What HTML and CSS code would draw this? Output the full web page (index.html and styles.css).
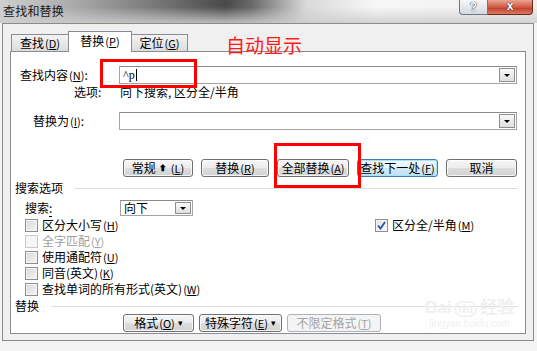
FILE: index.html
```html
<!DOCTYPE html>
<html lang="zh-CN">
<head>
    <meta charset="UTF-8">
    <title>查找和替换</title>
    <link rel="stylesheet" href="styles.css">
</head>
<body>
    <div class="titlebar">
        <span class="title">查找和替换</span>
        <div class="winbtns">
            <span class="help">?</span>
            <span class="close">x</span>
        </div>
    </div>

    <div class="window">
        <div class="tabs">
            <div class="tab t1">查找<span class="k">(<u>D</u>)</span></div>
            <div class="tab t2 on">替换<span class="k">(<u>P</u>)</span></div>
            <div class="tab t3">定位<span class="k">(<u>G</u>)</span></div>
        </div>

        <div class="panel">
            <!-- 查找内容 -->
            <div class="row">
                <label class="lbl">查找内容<span class="k">(<u>N</u>)</span>:</label>
                <div class="combo">
                    <span class="val">^p<i class="caret"></i></span>
                    <span class="drop"><i></i></span>
                </div>
            </div>
            <div class="opts">
                <span class="olbl">选项:</span>
                <span>向下搜索, 区分全/半角</span>
            </div>

            <!-- 替换为 -->
            <div class="row rep">
                <label class="lbl">替换为<span class="k">(<u>I</u>)</span>:</label>
                <div class="combo">
                    <span class="val"></span>
                    <span class="drop"><i></i></span>
                </div>
            </div>

            <div class="btns">
                <button class="btn w70">常规 <span class="up">&#x2b06;</span> <span class="k">(<u>L</u>)</span></button>
                <button class="btn w68">替换<span class="k">(<u>R</u>)</span></button>
                <button class="btn w72">全部替换<span class="k">(<u>A</u>)</span></button>
                <button class="btn w81 focus">查找下一处<span class="k">(<u>F</u>)</span></button>
                <button class="btn w71">取消</button>
            </div>

            <!-- 搜索选项 -->
            <div class="sect">搜索选项</div>
            <div class="srch">
                <span class="slbl">搜索<u>:</u></span>
                <div class="select">
                    <span class="val">向下</span>
                    <span class="drop"><i></i></span>
                </div>
            </div>

            <div class="checks">
                <div class="col">
                    <div class="chk"><span class="box"></span>区分大小写<span class="k">(<u>H</u>)</span></div>
                    <div class="chk off"><span class="box"></span>全字匹配<span class="k">(<u>Y</u>)</span></div>
                    <div class="chk"><span class="box"></span>使用通配符<span class="k">(<u>U</u>)</span></div>
                    <div class="chk"><span class="box"></span>同音(英文)<span class="k">(<u>K</u>)</span></div>
                    <div class="chk"><span class="box"></span>查找单词的所有形式(英文)<span class="k">(<u>W</u>)</span></div>
                </div>
                <div class="col">
                    <div class="chk"><span class="box checked"><svg width="9" height="9" viewBox="0 0 9 9"><path d="M1 4.5 L3.5 7.5 L8 1" fill="none" stroke="#2a4fa8" stroke-width="1.8"/></svg></span>区分全/半角<span class="k">(<u>M</u>)</span></div>
                </div>
            </div>

            <!-- 替换 -->
            <div class="sect sect2">替换</div>
            <div class="btns btns2">
                <button class="btn w71">格式<span class="k">(<u>O</u>)</span> <span class="tri">&#9662;</span></button>
                <button class="btn w83">特殊字符<span class="k">(<u>E</u>)</span> <span class="tri">&#9662;</span></button>
                <button class="btn w94 dis">不限定格式<span class="k">(<u>T</u>)</span></button>
            </div>

            <div class="mark">
                <div class="mlogo">Bai<span class="paw">du</span>经验</div>
                <div class="murl">jingyan.baidu.com</div>
            </div>
        </div>
    </div>

    <!-- 说明标注 -->
    <div class="note">自动显示</div>
    <div class="redbox r1"></div>
    <div class="redbox r2"></div>
</body>
</html>
```

FILE: styles.css
```css
*{ margin: 0; padding: 0; box-sizing: border-box;}
button{ font: inherit; color: inherit;}
u{ text-decoration: underline;}

body{ width: 537px; height: 351px; overflow: hidden; position: relative; background-color: #f3f3f3; font-family: "Liberation Sans", "Noto Sans CJK SC", sans-serif; font-size: 12px; color: #000;}

/* 标题栏 */
.titlebar{ height: 23px; display: flex; justify-content: space-between; align-items: flex-start; padding: 0 4px 0 3px;
    background: linear-gradient(to bottom, rgba(215,215,215,0) 30%, rgba(205,205,205,.85) 100%),
                linear-gradient(to right, #cfcfcf 0%, #a9a9a9 14%, #7b7b7b 28%, #4a4a4a 42%, #6a6a6a 47%, #d9d9d9 57%, #f7f7f7 70%, #efefef 100%);}
.title{ margin-top: 3px; line-height: 15px; font-family: "Noto Sans CJK SC", sans-serif; color: #1a1a1a; letter-spacing: .2px;}
.winbtns{ display: flex;}
.help{ width: 29px; height: 15px; border: 1px solid #6e7782; border-top: none; border-radius: 0 0 0 4px; background: linear-gradient(#f5f7f9, #d3d9e0); text-align: center; line-height: 14px; font-size: 12px; font-weight: bold; color: #fff; text-shadow: 0 0 1px #333, 0 0 1px #333;}
.close{ width: 45px; height: 15px; border: 1px solid #6a2a20; border-top: none; border-left: none; border-radius: 0 0 4px 0; background: linear-gradient(#eaa593, #cf5b46 50%, #c34430 60%, #dc7a62); text-align: center; line-height: 12px; font-size: 12px; font-weight: bold; color: #fff; text-shadow: 0 0 1px #3a1a14, 0 0 1px #3a1a14;}

/* 창 본체 */
.window{ margin-left: 2px; width: 532px; height: 318px; border: 1px solid #8b8b8b; background-color: #f0f0f0; padding: 7px 0 0 7px;}

.tabs{ display: flex; align-items: flex-end; height: 21px; margin-bottom: -1px; padding-left: 1px; position: relative; z-index: 1;}
.tab{ height: 17px; margin-bottom: 1px; border: 1px solid #898c95; border-bottom: none; background: linear-gradient(#f3f3f3, #dcdcdc); display: flex; align-items: center; justify-content: center; font-family: "Noto Sans CJK SC", sans-serif; line-height: 14px;}
.tab.t1{ width: 57px; border-right: none;}
.tab.t2{ width: 64px;}
.tab.t3{ width: 56px; border-left: none;}
.tab.on{ height: 21px; margin-bottom: 0; background: #fff; padding-bottom: 2px;}

.panel{ width: 516px; height: 283px; border: 1px solid #898c95; background-color: #fff; padding: 14px 7px 0 4px; position: relative; font-family: "Noto Sans CJK SC", sans-serif; line-height: 14px;}

.k{ font-size: 11px; margin-left: 1px;}

.row{ display: flex; align-items: center; height: 18px;}
.row.rep{ margin-top: 12px;}
.lbl{ width: 104px; padding-left: 5px;}
.row.rep .lbl{ padding-left: 18px;}
.combo{ width: 398px; height: 18px; border: 1px solid #a3a3a3; border-top-color: #8a8a8a; display: flex; align-items: center; justify-content: space-between; padding-left: 3px;}
.val{ display: flex; align-items: center; font-family: "Liberation Serif", "Noto Sans CJK SC", serif;}
.select .val{ font-family: "Noto Sans CJK SC", sans-serif;}
.caret{ width: 1px; height: 12px; background-color: #000; margin-left: 1px;}
.drop{ width: 16px; height: 14px; margin-right: 1px; border: 1px solid #8f8f8f; background: linear-gradient(#fafafa, #dedede); display: flex; align-items: center; justify-content: center;}
.drop i{ width: 0; height: 0; border-left: 3px solid transparent; border-right: 3px solid transparent; border-top: 3px solid #000;}

.opts{ display: flex; align-items: center; height: 16px;}
.olbl{ width: 105px; padding-left: 59px;}

/* 버튼 */
.btns{ display: flex; gap: 8px; height: 18px; margin-top: 29px; padding-left: 108px;}
.btns2{ gap: 5px; margin-top: 1px;}
.btn{ height: 18px; border: 1px solid #707070; border-radius: 3px; background: linear-gradient(#f6f6f6 0%, #ececec 48%, #dddddd 52%, #d2d2d2 100%); box-shadow: inset 0 0 0 1px rgba(255,255,255,.75); display: flex; align-items: center; justify-content: center; font-family: "Noto Sans CJK SC", sans-serif; line-height: 14px;}
.btn.focus{ border-color: #3c7fb1; box-shadow: inset 0 0 0 1px #a6e3f7; background: linear-gradient(#f2f9fd 0%, #e3f2fa 48%, #cfe8f6 52%, #c4e1f2 100%);}
.btn.dis{ border-color: #adb2b5; background: #f4f4f4; box-shadow: none; color: #a3a3a3;}
.w68{ width: 68px;} .w70{ width: 70px;} .w71{ width: 71px;} .w72{ width: 72px;} .w81{ width: 81px;} .w83{ width: 83px;} .w94{ width: 94px;}
.up{ font-size: 8px; margin: 0 3px;}
.tri{ font-size: 9px; margin-left: 3px;}

/* 검색 옵션 */
.sect{ display: flex; align-items: center; gap: 12px; height: 14px; margin-top: 4px;}
.sect::after{ content: ""; flex: 1; height: 1px; background-color: #d5dfe5;}
.sect2{ margin-top: 2px;}

.srch{ display: flex; align-items: center; height: 16px; margin-top: 5px;}
.slbl{ width: 105px; padding-left: 10px;}
.slbl u{ text-decoration: none; border-bottom: 1px solid #000;}
.select{ width: 73px; height: 16px; border: 1px solid #a3a3a3; border-top-color: #8a8a8a; display: flex; align-items: center; justify-content: space-between; padding-left: 3px;}
.select .drop{ height: 12px;}

.checks{ display: flex; margin-top: 1px;}
.checks .col:first-child{ width: 350px;}
.chk{ display: flex; align-items: center; height: 16px; padding-left: 10px;}
.box{ width: 13px; height: 13px; margin-right: 4px; border: 1px solid #8e8f8f; background: linear-gradient(135deg, #d6d6d6, #f7f7f7); box-shadow: inset 0 0 0 1px #f4f4f4; display: flex; align-items: center; justify-content: center;}
.box.checked{ background: linear-gradient(135deg, #dfe3ea, #f7f8fa);}
.chk.off{ color: #a0a0a0;}
.chk.off .box{ border-color: #c9c9c9; background: #f6f6f6;}

/* 워터마크 */
.mark{ position: absolute; left: 414px; top: 246px; color: #f0f0f0; text-align: center;}
.mlogo{ font-family: "Liberation Sans", "Noto Sans CJK SC", sans-serif; font-size: 17px; font-weight: bold; line-height: 20px;}
.paw{ display: inline-block; margin: 0 3px; padding: 0 2px; border: 2px solid #f2f2f2; border-radius: 9px; font-size: 12px; line-height: 12px;}
.murl{ font-size: 10px; line-height: 12px; font-family: "Liberation Sans", sans-serif;}

/* 빨간 표시 */
.note{ position: absolute; left: 226px; top: 34px; font-family: "Noto Sans CJK SC", sans-serif; font-size: 19px; line-height: 22px; color: #ff1a1a; z-index: 3;}
.redbox{ position: absolute; border: 3px solid #ff0000; z-index: 3;}
.r1{ left: 100px; top: 59px; width: 97px; height: 29px;}
.r2{ left: 274px; top: 143px; width: 87px; height: 45px;}
```
